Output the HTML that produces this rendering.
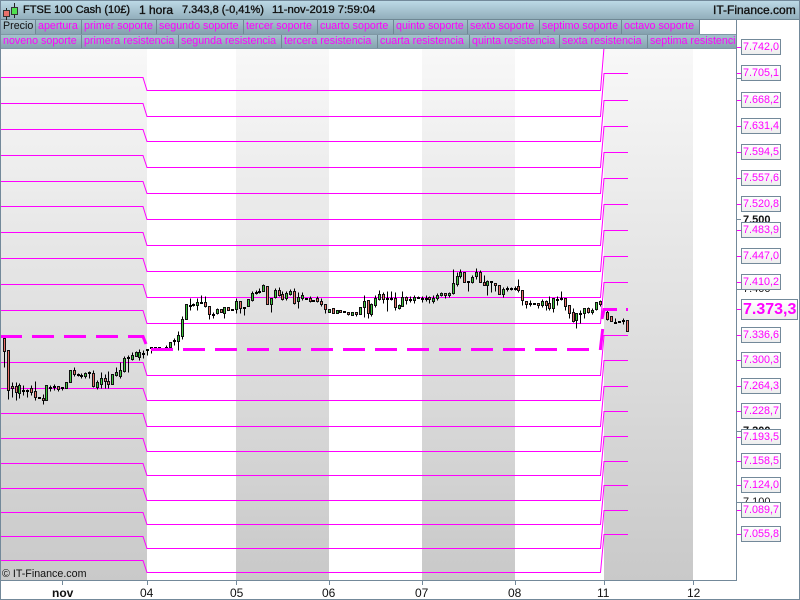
<!DOCTYPE html>
<html><head><meta charset="utf-8"><style>
html,body{margin:0;padding:0;background:#fff}
#r{position:relative;width:800px;height:600px;overflow:hidden;background:#fff;font-family:"Liberation Sans",sans-serif}
#r div{position:absolute;white-space:nowrap;box-sizing:border-box}
.s{top:49px;height:531px;background:linear-gradient(#f8f8f8,#c9c9c9)}
.t{height:14px;font-size:10.7px;line-height:13px;color:#f0f;padding-left:2px;background:linear-gradient(#a6c2ce,#84a0ae);border-right:1px solid #6f8794;overflow:hidden}
.h{top:1px;height:19px;line-height:19px;font-size:12px;color:#111;-webkit-text-stroke:.35px #111}
.p{left:741px;width:40px;height:16px;border:1px solid #73899a;background:linear-gradient(#fff,#eee);color:#f0f;font-size:10.8px;line-height:14px;padding-left:1px;overflow:hidden}
.k{left:743px;font-size:11px;font-weight:bold;line-height:12px;color:#111}
.d{top:586px;font-size:12px;line-height:14px;color:#111}
</style></head><body><div id="r">
<div class="s" style="left:1px;width:146px"></div>
<div class="s" style="left:236px;width:93px"></div>
<div class="s" style="left:422px;width:93px"></div>
<div class="s" style="left:604px;width:89px"></div>

<svg width="800" height="600" style="position:absolute;left:0;top:0">
<defs><clipPath id="c"><rect x="1" y="49" width="735" height="531"/></clipPath></defs>
<g clip-path="url(#c)">
<path fill="none" stroke="#f0f" stroke-width="1" d="M1 77.5H143L147 90.5H600.5L604 47.5H628M1 103.5H143L147 116.5H600.5L604 73.5H628M1 129.5H143L147 141.5H600.5L604 100.5H628M1 155.5H143L147 167.5H600.5L604 126.5H628M1 181.5H143L147 193.5H600.5L604 152.5H628M1 206.5H143L147 219.5H600.5L604 178.5H628M1 232.5H143L147 245.5H600.5L604 204.5H628M1 258.5H143L147 271.5H600.5L604 230.5H628M1 284.5H143L147 297.5H600.5L604 256.5H628M1 310.5H143L147 323.5H600.5L604 282.5H628M1 362.5H143L147 375.5H600.5L604 335.5H628M1 388.5H143L147 400.5H600.5L604 360.5H628M1 413.5H143L147 426.5H600.5L604 386.5H628M1 438.5H143L147 451.5H600.5L604 411.5H628M1 463.5H143L147 475.5H600.5L604 436.5H628M1 488.5H143L147 500.5H600.5L604 461.5H628M1 512.5H143L147 524.5H600.5L604 485.5H628M1 536.5H143L147 548.5H600.5L604 510.5H628M1 560.5H143L147 572.5H600.5L604 534.5H628"/>
<g transform="translate(.5 .5)" shape-rendering="crispEdges">
<path fill="none" stroke="#000" d="M4 338V367M8 350V399M12 382V397M16 382V400M19 383V398M23 385V395M27 389V397M31 385V395M35 381V400M43 394V404M46 385V400M50 385V391M54 384V390M58 386V391M62 387V390M74 367V376M78 373V376M81 373V378M85 372V378M89 371V378M93 370V387M97 380V389M101 372V388M105 374V388M108 371V388M116 367V376M120 362V378M124 356V372M128 355V372M132 352V360M136 351V356M139 349V360M143 350V358M147 349V355M151 347V353M166 345V349M174 338V345M178 331V350M182 316V339M190 298V310M193 303V306M197 298V310M201 295V303M205 296V307M209 306V319M213 312V318M217 308V314M224 307V318M236 298V313M240 308V313M244 307V315M252 291V301M256 290V294M259 288V293M263 284V291M271 298V312M275 288V298M279 287V296M282 291V300M286 291V300M290 289V295M294 288V304M298 292V308M302 292V300M310 296V302M317 296V302M321 298V306M325 304V313M348 313V315M356 312V316M364 295V317M368 300V318M371 303V316M375 295V307M379 290V300M383 292V303M387 291V311M391 291V300M395 292V310M399 304V309M402 291V306M406 296V304M410 296V302M414 295V303M418 296V298M422 296V302M426 295V301M429 296V303M433 295V303M437 293V300M441 292V296M445 294V298M449 292V297M453 269V294M457 272V286M460 269V278M468 281V291M472 275V283M476 268V279M480 270V282M484 275V285M487 280V295M491 281V292M495 283V291M503 287V297M507 286V291M511 287V290M515 286V290M518 279V292M522 290V305M526 301V308M530 300V306M538 303V308M542 299V307M546 300V310M549 296V310M553 298V312M557 296V305M561 291V300M565 298V310M569 305V318M573 308V322M576 313V328M580 310V323M584 308V318M588 307V313M592 308V314M596 302V310M600 300V306M607 310V320M615 318V323M623 318V324"/>
<path fill="#e87068" stroke="#111" d="M3 338h2v13h-2zM7 350h2v40h-2zM11 386h2v2h-2zM15 386h2v6h-2zM30 388h2v4h-2zM34 391h2v6h-2zM42 398h2v2h-2zM57 386h2v3h-2zM73 370h2v4h-2zM92 373h2v13h-2zM104 378h2v3h-2zM107 381h2v3h-2zM204 302h2v4h-2zM208 306h2v8h-2zM220 309h2v3h-2zM227 307h2v3h-2zM239 301h2v7h-2zM266 286h2v18h-2zM278 290h2v5h-2zM281 294h2v5h-2zM293 291h2v12h-2zM309 298h2v3h-2zM316 298h2v3h-2zM320 301h2v3h-2zM324 304h2v5h-2zM332 308h2v5h-2zM339 310h2v2h-2zM347 312h2v2h-2zM355 312h2v2h-2zM367 300h2v13h-2zM382 294h2v5h-2zM394 298h2v9h-2zM405 297h2v3h-2zM428 297h2v2h-2zM444 293h2v2h-2zM463 272h2v10h-2zM479 272h2v10h-2zM483 282h2v3h-2zM494 283h2v2h-2zM498 285h2v9h-2zM517 286h2v4h-2zM521 290h2v10h-2zM525 301h2v3h-2zM537 303h2v2h-2zM545 301h2v4h-2zM548 303h2v5h-2zM564 298h2v8h-2zM568 305h2v8h-2zM572 312h2v9h-2zM587 308h2v4h-2zM599 301h2v3h-2zM606 312h2v7h-2zM610 316h2v5h-2zM626 320h2v11h-2z"/>
<path fill="#3cc83c" stroke="#111" d="M18 385h2v8h-2zM45 385h2v15h-2zM65 382h2v6h-2zM69 370h2v12h-2zM84 373h2v3h-2zM96 382h2v5h-2zM100 378h2v6h-2zM111 374h2v10h-2zM115 372h2v3h-2zM119 370h2v6h-2zM123 358h2v13h-2zM131 355h2v4h-2zM135 352h2v4h-2zM138 352h2v5h-2zM169 342h2v5h-2zM177 335h2v6h-2zM181 319h2v17h-2zM185 304h2v15h-2zM196 302h2v3h-2zM216 309h2v4h-2zM223 307h2v6h-2zM235 301h2v8h-2zM247 299h2v7h-2zM251 293h2v7h-2zM262 285h2v6h-2zM270 298h2v6h-2zM274 290h2v7h-2zM285 293h2v5h-2zM289 291h2v3h-2zM297 297h2v4h-2zM301 295h2v3h-2zM328 309h2v3h-2zM336 310h2v3h-2zM351 312h2v3h-2zM359 307h2v7h-2zM363 301h2v6h-2zM370 304h2v10h-2zM374 298h2v7h-2zM378 294h2v5h-2zM398 305h2v3h-2zM401 297h2v9h-2zM413 297h2v3h-2zM432 298h2v3h-2zM436 295h2v3h-2zM440 293h2v2h-2zM448 293h2v2h-2zM452 283h2v10h-2zM456 276h2v8h-2zM459 272h2v4h-2zM471 277h2v5h-2zM475 272h2v4h-2zM486 281h2v4h-2zM502 289h2v5h-2zM541 301h2v4h-2zM552 298h2v10h-2zM575 313h2v7h-2zM583 308h2v5h-2zM591 310h2v2h-2zM595 302h2v7h-2z"/>
<path fill="#000" stroke="#000" d="M22 390h2v1h-2zM26 390h2v1h-2zM38 397h2v1h-2zM49 387h2v1h-2zM53 386h2v1h-2zM61 387h2v1h-2zM77 374h2v1h-2zM80 375h2v1h-2zM88 372h2v1h-2zM127 357h2v1h-2zM142 353h2v1h-2zM146 349h2v1h-2zM150 347h2v1h-2zM154 347h2v1h-2zM158 347h2v1h-2zM162 348h2v1h-2zM165 347h2v1h-2zM173 340h2v1h-2zM189 305h2v1h-2zM192 304h2v1h-2zM200 302h2v1h-2zM212 314h2v1h-2zM231 309h2v1h-2zM243 307h2v1h-2zM255 292h2v1h-2zM258 291h2v1h-2zM305 298h2v1h-2zM312 300h2v1h-2zM343 311h2v1h-2zM386 298h2v1h-2zM390 298h2v1h-2zM409 299h2v1h-2zM417 297h2v1h-2zM421 298h2v1h-2zM425 298h2v1h-2zM467 281h2v1h-2zM490 281h2v1h-2zM506 288h2v1h-2zM510 288h2v1h-2zM514 288h2v1h-2zM529 303h2v1h-2zM533 303h2v1h-2zM556 299h2v1h-2zM560 298h2v1h-2zM579 313h2v1h-2zM614 322h2v1h-2zM618 321h2v1h-2zM622 320h2v1h-2z"/>
</g>
<path fill="none" stroke="#f0f" stroke-width="3" d="M1 336.5H22M32 336.5H54M64 336.5H86M96 336.5H118M128 336.5H143L146 344M151 349.5H173M183 349.5H205M215 349.5H237M247 349.5H269M279 349.5H301M311 349.5H333M343 349.5H365M375 349.5H397M407 349.5H429M439 349.5H461M471 349.5H493M503 349.5H525M535 349.5H557M567 349.5H589M600.3 350L602.7 329M602 319L604 309.5H617M626 309.5H628"/>
</g>
<path fill="none" stroke="#73899a" d="M736.5 49V580.5M0 580.5H737M.5 0V600M799.5 0V600M0 599.5H800M62.5 581V585M147.5 581V585M236.5 581V585M329.5 581V585M422.5 581V585M515.5 581V585M604.5 581V585M693.5 581V585M737 219.5H741M737 289.5H741M737 431.5H741M737 502.5H741M737 78.5H741"/>
<path fill="none" stroke="#f0f" d="M737 47.5H741M737 73.5H741M737 100.5H741M737 126.5H741M737 152.5H741M737 178.5H741M737 204.5H741M737 230.5H741M737 256.5H741M737 282.5H741M737 309.5H741M737 335.5H741M737 360.5H741M737 386.5H741M737 411.5H741M737 437.5H741M737 461.5H741M737 485.5H741M737 510.5H741M737 534.5H741"/>
</svg>

<div style="left:0;top:0;width:800px;height:20px;background:linear-gradient(#bcd9e6,#92aebb);border:1px solid #73899a;border-bottom:1px solid #6f8794"></div>
<svg width="20" height="20" style="position:absolute;left:0;top:0" shape-rendering="crispEdges">
<path stroke="#222" d="M6.5 8V20M14.5 3V18"/>
<rect x="3.5" y="10.5" width="6" height="6" fill="#e8706a" stroke="#333"/>
<rect x="11.5" y="7.5" width="6" height="7" fill="#50e050" stroke="#333"/>
</svg>
<div class="h" style="left:23px;font-size:11px">FTSE 100 Cash (10£)</div>
<div class="h" style="left:139px">1 hora</div>
<div class="h" style="left:182px;font-size:11px">7.343,8 (-0,41%)</div>
<div class="h" style="left:272px;font-size:11.3px">11-nov-2019 7:59:04</div>
<div class="h" style="left:713px">IT-Finance.com</div>

<div class="t" style="left:1px;top:20px;width:35px;color:#111;background:linear-gradient(#a9c4cf,#8fabb7)">Precio</div>
<div class="t" style="left:36px;top:20px;width:46px">apertura</div>
<div class="t" style="left:82px;top:20px;width:75px">primer soporte</div>
<div class="t" style="left:157px;top:20px;width:87px">segundo soporte</div>
<div class="t" style="left:244px;top:20px;width:74px">tercer soporte</div>
<div class="t" style="left:318px;top:20px;width:76px">cuarto soporte</div>
<div class="t" style="left:394px;top:20px;width:74px">quinto soporte</div>
<div class="t" style="left:468px;top:20px;width:72px">sexto soporte</div>
<div class="t" style="left:540px;top:20px;width:82px">septimo soporte</div>
<div class="t" style="left:622px;top:20px;width:78px">octavo soporte</div>

<div class="t" style="left:1px;top:35px;width:81px">noveno soporte</div>
<div class="t" style="left:82px;top:35px;width:97px">primera resistencia</div>
<div class="t" style="left:179px;top:35px;width:103px">segunda resistencia</div>
<div class="t" style="left:282px;top:35px;width:96px">tercera resistencia</div>
<div class="t" style="left:378px;top:35px;width:92px">cuarta resistencia</div>
<div class="t" style="left:470px;top:35px;width:90px">quinta resistencia</div>
<div class="t" style="left:560px;top:35px;width:88px">sexta resistencia</div>
<div class="t" style="left:648px;top:35px;width:88px;border-right:0">septima resistencia</div>
<div style="left:1px;top:34px;width:735px;height:1px;background:#7f98a5"></div>
<div style="left:1px;top:48px;width:735px;height:1px;background:#7f98a5"></div>
<div style="left:736px;top:20px;width:1px;height:29px;background:#73899a"></div>

<div class="k" style="top:214px">7.500</div>
<div class="k" style="top:283px;font-weight:normal">7.400</div>
<div class="k" style="top:425px">7.200</div>
<div class="k" style="top:496px;font-weight:normal">7.100</div>

<div class="p" style="top:39px">7.742,0</div>
<div class="p" style="top:65px">7.705,1</div>
<div class="p" style="top:92px">7.668,2</div>
<div class="p" style="top:118px">7.631,4</div>
<div class="p" style="top:144px">7.594,5</div>
<div class="p" style="top:170px">7.557,6</div>
<div class="p" style="top:196px">7.520,8</div>
<div class="p" style="top:222px">7.483,9</div>
<div class="p" style="top:248px">7.447,0</div>
<div class="p" style="top:274px">7.410,2</div>
<div class="p" style="top:327px">7.336,6</div>
<div class="p" style="top:352px">7.300,3</div>
<div class="p" style="top:378px">7.264,3</div>
<div class="p" style="top:403px">7.228,7</div>
<div class="p" style="top:429px">7.193,5</div>
<div class="p" style="top:453px">7.158,5</div>
<div class="p" style="top:477px">7.124,0</div>
<div class="p" style="top:502px">7.089,7</div>
<div class="p" style="top:526px">7.055,8</div>
<div class="p" style="top:299px;width:57px;height:21px;font-size:16px;font-weight:bold;line-height:19px">7.373,3</div>

<div style="left:2px;top:567px;font-size:10.7px;line-height:14px;color:#111">© IT-Finance.com</div>
<div class="d" style="left:52px;font-weight:bold">nov</div>
<div class="d" style="left:140px">04</div>
<div class="d" style="left:230px">05</div>
<div class="d" style="left:322px">06</div>
<div class="d" style="left:415px">07</div>
<div class="d" style="left:508px">08</div>
<div class="d" style="left:597px">11</div>
<div class="d" style="left:687px">12</div>
</div></body></html>
